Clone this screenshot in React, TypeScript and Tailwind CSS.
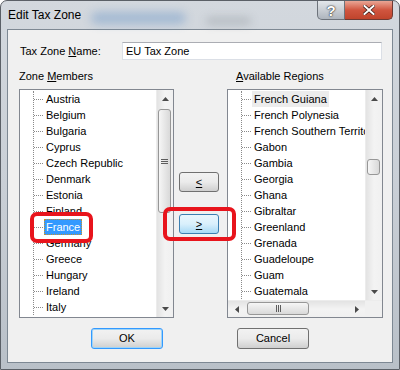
import React from 'react';

const FONT = { fontFamily: '"Liberation Sans", Arial, sans-serif' };

const leftItems = [
  'Austria', 'Belgium', 'Bulgaria', 'Cyprus', 'Czech Republic', 'Denmark', 'Estonia',
  'Finland', 'France', 'Germany', 'Greece', 'Hungary', 'Ireland', 'Italy',
];

const rightItems = [
  'French Guiana', 'French Polynesia', 'French Southern Territories', 'Gabon', 'Gambia',
  'Georgia', 'Ghana', 'Gibraltar', 'Greenland', 'Grenada', 'Guadeloupe', 'Guam', 'Guatemala',
];

const Arrow: React.FC<{ dir: 'up' | 'down' | 'left' | 'right' }> = ({ dir }) => {
  const pts = {
    up: '0,4 3.5,0 7,4',
    down: '0,0 3.5,4 7,0',
    left: '4,0 0,3.5 4,7',
    right: '0,0 4,3.5 0,7',
  }[dir];
  const vertical = dir === 'up' || dir === 'down';
  return (
    <svg width={vertical ? 7 : 4} height={vertical ? 4 : 7} viewBox={vertical ? '0 0 7 4' : '0 0 4 7'}>
      <polygon points={pts} fill="#4a4a4a" />
    </svg>
  );
};

const VScroll: React.FC<{ thumbTop: number; thumbHeight: number }> = ({ thumbTop, thumbHeight }) => (
  <div className="w-[17px] shrink-0 flex flex-col bg-gradient-to-r from-[#e3e3e3] via-[#f3f3f3] to-[#f0f0f0] border-l border-[#ececec]">
    <div className="h-[17px] flex items-center justify-center">
      <Arrow dir="up" />
    </div>
    <div className="flex-1 flex flex-col">
      <div
        className="mx-[1px] mr-[2px] border border-[#979797] rounded-[3px] bg-gradient-to-r from-[#f6f6f6] to-[#d9d9d9] flex flex-col items-center justify-center gap-[1px]"
        style={{ marginTop: thumbTop, height: thumbHeight }}
      >
        {thumbHeight > 30 && (
          <>
            <div className="w-[7px] h-[1px] bg-[#5d5d5d]" />
            <div className="w-[7px] h-[1px] bg-[#5d5d5d]" />
            <div className="w-[7px] h-[1px] bg-[#5d5d5d]" />
          </>
        )}
      </div>
    </div>
    <div className="h-[17px] flex items-center justify-center">
      <Arrow dir="down" />
    </div>
  </div>
);

const HScroll: React.FC = () => (
  <div className="h-[17px] shrink-0 flex bg-gradient-to-b from-[#e3e3e3] via-[#f3f3f3] to-[#f0f0f0] border-t border-[#ececec]">
    <div className="w-[17px] flex items-center justify-center">
      <Arrow dir="left" />
    </div>
    <div className="flex-1 flex items-stretch">
      <div className="ml-[2px] w-[62px] my-[1px] mb-[2px] border border-[#979797] rounded-[3px] bg-gradient-to-b from-[#f6f6f6] to-[#d9d9d9] flex items-center justify-center gap-[1px]">
        <div className="w-[1px] h-[7px] bg-[#5d5d5d]" />
        <div className="w-[1px] h-[7px] bg-[#5d5d5d]" />
        <div className="w-[1px] h-[7px] bg-[#5d5d5d]" />
      </div>
    </div>
    <div className="w-[17px] flex items-center justify-center">
      <Arrow dir="right" />
    </div>
    <div className="w-[17px] bg-[#f0f0f0]" />
  </div>
);

const TreeRows: React.FC<{ items: string[]; selected?: number; inactive?: number }> = ({ items, selected, inactive }) => (
  <div className="flex-1 min-w-0 overflow-hidden pt-[1px] bg-white">
    <div className="ml-[13px] border-l border-dotted border-[#8a8a8a]">
      {items.map((item, i) => (
        <div key={item} className="h-[16px] flex items-center whitespace-nowrap">
          <span className="w-[9px] shrink-0 border-t border-dotted border-[#8a8a8a]" />
          <span
            className={`ml-[1px] shrink-0 h-[16px] leading-[16px] px-[2px] text-[11px] ${
              i === selected
                ? 'bg-[#3399ff] text-white outline outline-1 outline-dotted outline-[#c8902c] -outline-offset-1'
                : i === inactive
                ? 'bg-[#ececec] text-black'
                : 'text-black'
            }`}
          >
            {item}
          </span>
        </div>
      ))}
    </div>
  </div>
);

const WinButton: React.FC<{ children: React.ReactNode; className?: string; variant?: 'normal' | 'hot' | 'default' }> = ({
  children,
  className = '',
  variant = 'normal',
}) => {
  const look =
    variant === 'hot'
      ? 'border-[#3c7fb1] bg-gradient-to-b from-[#eaf6fd] via-[#d9f0fc] to-[#a7d9f5]'
      : variant === 'default'
      ? 'border-[#3399ff] shadow-[inset_0_0_0_1px_#9fd4f7] bg-gradient-to-b from-[#f2f2f2] via-[#ebebeb] to-[#cfcfcf]'
      : 'border-[#707070] bg-gradient-to-b from-[#f2f2f2] via-[#ebebeb] to-[#cfcfcf]';
  return (
    <div className={`border rounded-[3px] flex items-center justify-center text-[11px] text-black ${look} ${className}`}>
      {children}
    </div>
  );
};

export default function App() {
  return (
    <div
      className="relative w-[400px] h-[370px] overflow-hidden rounded-t-[7px] border border-[#5b6067] bg-gradient-to-b from-[#d3d8de] via-[#c9cfd6] to-[#b9c0c8] flex flex-col"
      style={FONT}
    >
      {/* title bar */}
      <div className="relative h-[28px] flex items-start">
        <div className="absolute left-[90px] top-[11px] w-[95px] h-[12px] rounded-full bg-[#5d8dc4] opacity-40 blur-[5px]" />
        <div className="absolute left-[205px] top-[16px] w-[45px] h-[8px] rounded-full bg-[#8e959c] opacity-40 blur-[4px]" />
        <span className="relative ml-[7px] mt-[7px] text-[12px] text-black leading-[15px]">Edit Tax Zone</span>
        <div className="relative ml-auto mr-[6px] flex">
          <div className="w-[28px] h-[19px] border border-[#6d737b] border-t-0 rounded-bl-[5px] bg-gradient-to-b from-[#e3e7eb] via-[#c9ced4] to-[#aeb5bd] flex items-center justify-center">
            <span className="text-[15px] font-bold text-white leading-none [text-shadow:0_0_2px_#222,0_0_1px_#222]">?</span>
          </div>
          <div className="w-[48px] h-[19px] border border-[#6e3a33] border-t-0 border-l-0 rounded-br-[5px] bg-gradient-to-b from-[#e9a595] via-[#d0553f] to-[#c0442c] flex items-center justify-center">
            <svg width="12" height="10" viewBox="0 0 12 10">
              <path d="M1.5 1 L10.5 9 M10.5 1 L1.5 9" stroke="#3a1a14" strokeWidth="3.4" strokeLinecap="square" />
              <path d="M1.5 1 L10.5 9 M10.5 1 L1.5 9" stroke="#ffffff" strokeWidth="2" strokeLinecap="square" />
            </svg>
          </div>
        </div>
      </div>

      {/* client area */}
      <div className="ml-[6px] w-[386px] h-[334px] border border-[#7d8893] bg-[#f0f0f0] flex flex-col">
        <div className="mt-[12px] ml-[12px] h-[18px] flex items-center">
          <span className="w-[102px] text-[11px] text-black">
            Tax Zone <span className="underline">N</span>ame:
          </span>
          <div className="w-[260px] h-[18px] bg-white border border-[#dbdfe6] border-t-[#abadb3] flex items-center pl-[3px] text-[11px] text-black">
            EU Tax Zone
          </div>
        </div>

        <div className="ml-[11px] mt-[8px] flex">
          <div className="w-[155px] flex flex-col">
            <span className="h-[16px] leading-[16px] text-[11px] text-black">
              Zone <span className="underline">M</span>embers
            </span>
            <div className="mt-[5px] h-[229px] border border-[#828790] bg-white flex overflow-hidden">
              <TreeRows items={leftItems} selected={8} />
              <VScroll thumbTop={2} thumbHeight={104} />
            </div>
          </div>

          <div className="w-[53px] flex flex-col pt-[104px] pl-[5px] gap-[22px]">
            <WinButton className="w-[40px] h-[20px]">
              <span className="underline">&lt;</span>
            </WinButton>
            <WinButton className="w-[40px] h-[20px]" variant="hot">
              <span className="underline">&gt;</span>
            </WinButton>
          </div>

          <div className="w-[156px] flex flex-col">
            <span className="h-[16px] leading-[16px] pl-[9px] text-[11px] text-black">
              <span className="underline">A</span>vailable Regions
            </span>
            <div className="mt-[5px] h-[229px] border border-[#828790] bg-white flex flex-col overflow-hidden">
              <div className="flex-1 min-h-0 flex overflow-hidden">
                <TreeRows items={rightItems} inactive={0} />
                <VScroll thumbTop={52} thumbHeight={16} />
              </div>
              <HScroll />
            </div>
          </div>
        </div>

        <div className="mt-[10px] ml-[83px] flex gap-[74px]">
          <WinButton className="w-[72px] h-[21px]" variant="default">OK</WinButton>
          <WinButton className="w-[72px] h-[21px]">Cancel</WinButton>
        </div>
      </div>

      {/* red annotation marks */}
      <div className="absolute left-[29px] top-[211px] w-[63px] h-[31px] border-[4px] border-[#e8141c] rounded-[7px] pointer-events-none" />
      <div className="absolute left-[162px] top-[206px] w-[73px] h-[34px] border-[4px] border-[#e8141c] rounded-[7px] pointer-events-none" />
    </div>
  );
}
